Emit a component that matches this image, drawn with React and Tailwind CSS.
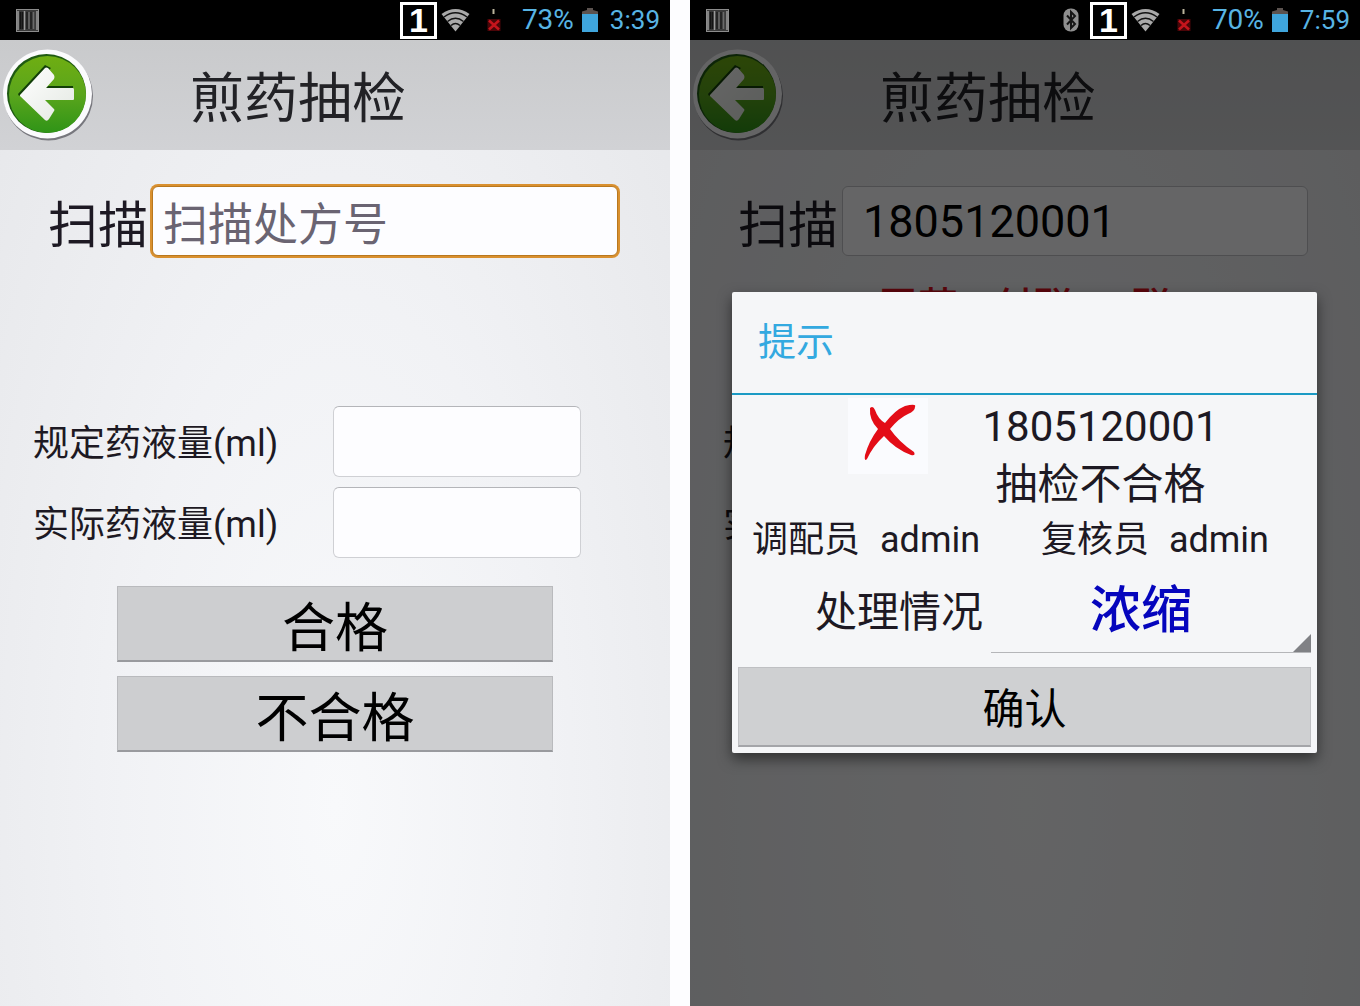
import React, { useState } from "react";

function BarcodeIcon() {
  return (
    <svg className="w-[23px] h-[23px]" viewBox="0 0 23 23" aria-hidden="true">
      <rect x="0.5" y="0.5" width="22" height="22" fill="#3a3a3a" stroke="#8c8c8c" />
      <path d="M2 2v19M8.5 2v19M21 2v19" stroke="#9a9a9a" strokeWidth="1.5" />
      <path d="M4.5 3v17M6.5 3v17" stroke="#141414" strokeWidth="1.5" />
      <path d="M11 3v17M15 3v17" stroke="#1f1f1f" strokeWidth="1.5" />
      <path d="M13 3v17M17.5 3v17" stroke="#6a6a6a" strokeWidth="1.5" />
    </svg>
  );
}

function BluetoothIcon() {
  return (
    <svg className="w-4 h-6" viewBox="0 0 16 24" aria-hidden="true">
      <rect x="0.5" y="0.5" width="15" height="23" rx="7" fill="#8f8f8f" />
      <path d="M4 7.5l8 8.5-4 4V4l4 4-8 8.5" fill="none" stroke="#151515" strokeWidth="2" />
    </svg>
  );
}

function WifiIcon() {
  return (
    <svg className="w-[29px] h-6" viewBox="0 0 29 24" aria-hidden="true">
      <path d="M0.5 6Q14.5 -4 28.5 6L14.5 23.5Z" fill="#a9a9a9" />
      <path d="M3 9Q14.5 0.5 26 9" fill="none" stroke="#111" strokeWidth="1.5" />
      <path d="M6.5 13.5Q14.5 7 22.5 13.5" fill="none" stroke="#111" strokeWidth="1.5" />
      <path d="M10 17.5Q14.5 13.5 19 17.5" fill="none" stroke="#111" strokeWidth="1.5" />
    </svg>
  );
}

function NoSignalIcon() {
  return (
    <svg className="w-4 h-6" viewBox="0 0 16 24" aria-hidden="true">
      <path d="M7.5 1v5" stroke="#b9b29a" strokeWidth="2" />
      <rect x="1.5" y="11" width="13" height="12" fill="#4a0508" />
      <path d="M3 12.5l10 9M13 12.5l-10 9" stroke="#c4141c" strokeWidth="2.5" />
    </svg>
  );
}

function BatteryIcon() {
  return (
    <svg className="w-4 h-6" viewBox="0 0 16 24" aria-hidden="true">
      <path d="M0 7V3.5L5 2V0h6v2l5 1.5V7Z" fill="#5c5350" />
      <rect y="6" width="16" height="18" fill="#3fa5dc" />
    </svg>
  );
}

function ArrowIcon({ id }) {
  return (
    <svg className="w-[92px] h-[94px]" viewBox="0 0 92 94" aria-hidden="true">
      <defs>
        <linearGradient id={`${id}-green`} x1="0" y1="0" x2="0" y2="1">
          <stop offset="0" stopColor="#6fae12" />
          <stop offset="0.5" stopColor="#5aa51c" />
          <stop offset="1" stopColor="#2f9417" />
        </linearGradient>
        <linearGradient id={`${id}-white`} x1="0" y1="0" x2="1" y2="1">
          <stop offset="0" stopColor="#fff" />
          <stop offset="1" stopColor="#e3e8e2" />
        </linearGradient>
      </defs>
      <circle cx="46.5" cy="48" r="44.5" fill="#77777d" />
      <circle cx="45.5" cy="46" r="44.5" fill="#fbfbfd" />
      <circle cx="44.5" cy="45.5" r="39.5" fill="#1f5a12" />
      <circle cx="45.5" cy="46.5" r="38.5" fill={`url(#${id}-green)`} />
      <path d="M16 46L43 17l6 3-4 4-28 24zM44 40l2-2h25v3z" fill="#123f08" />
      <path
        d="M18 47L43 20Q44 19 46 20L52 27Q53 29 52 31L44 40H71Q72 40 72 42V51Q72 52 71 52H43L52 61Q53 62 52 63L47 71Q45 74 43 72L18 48Z"
        fill={`url(#${id}-white)`}
      />
    </svg>
  );
}

function CrossIcon() {
  return (
    <svg className="w-20 h-[76px] bg-[#fafbfe]" viewBox="0 0 80 76" role="img" aria-label="不合格">
      <path
        d="M22 10Q25 7 27 12Q30 21 37 25Q47 12 57 8Q69 5 67 9Q67 13 60 16Q51 20 42 31Q51 44 66 54Q68 58 63 57Q47 51 36 38Q25 48 19 61Q16 64 17 57Q21 43 30 31Q21 22 22 10Z"
        fill="#e30d17"
      />
    </svg>
  );
}

function StatusBar({ battery, time, bluetooth }) {
  return (
    <div className="h-10 shrink-0 bg-black pl-4 pr-2.5 flex items-center justify-between text-[#58b4e4] leading-none">
      <BarcodeIcon />
      <div className="flex items-center">
        {bluetooth && <BluetoothIcon />}
        <span className="ml-[11px] w-[37px] h-[37px] border-[3px] border-white text-white text-[34px] leading-[31px] font-bold font-['Liberation_Sans',sans-serif] text-center">
          1
        </span>
        <span className="ml-1"><WifiIcon /></span>
        <span className="ml-4"><NoSignalIcon /></span>
        <span className="ml-5 text-[28px]">{battery}</span>
        <span className="ml-2"><BatteryIcon /></span>
        <span className="ml-3 text-[26px]">{time}</span>
      </div>
    </div>
  );
}

function AmountField({ id, label }) {
  return (
    <div className="flex items-center">
      <label htmlFor={id} className="w-[300px] text-[36px] leading-[44px] font-['Noto_Sans_CJK_SC',sans-serif]">
        {label}
        <span className="font-[Roboto,sans-serif]">(ml)</span>
      </label>
      <input
        id={id}
        type="text"
        inputMode="decimal"
        className="w-[248px] h-[71px] rounded-md border border-[#cfd0d4] border-t-[#b4b5b9] bg-[#fdfdff] px-2.5 text-[36px] outline-none"
      />
    </div>
  );
}

function ResultButton({ children }) {
  return (
    <button
      type="button"
      className="h-[76px] text-[53px] leading-[64px] font-['Noto_Sans_CJK_SC',sans-serif] bg-[#cdced0] border border-[#b9babd] border-b-2 border-b-[#999a9e]"
    >
      {children}
    </button>
  );
}

function CheckScreen({ id, battery, time, bluetooth, scan, focused, notice, children }) {
  const [code, setCode] = useState(scan);

  return (
    <section className="relative flex flex-col min-h-screen bg-[radial-gradient(ellipse_at_50%_80%,#f8f9fb_0%,#f1f2f5_45%,#e6e7ea_100%)]">
      <StatusBar battery={battery} time={time} bluetooth={bluetooth} />

      <header className="h-[110px] shrink-0 flex items-center gap-24 pl-0.5 bg-linear-to-b from-[#c9cacc] to-[#d1d2d5]">
        <button type="button" aria-label="返回">
          <ArrowIcon id={`${id}-arrow`} />
        </button>
        <h1 className="text-[54px] leading-[64px] text-[#222226] font-['Noto_Sans_CJK_SC',sans-serif]">
          煎药抽检
        </h1>
      </header>

      <main className="pt-9 text-[#1d1923]">
        <div className="flex items-center gap-1 pl-12 pr-[52px]">
          <label
            htmlFor={`${id}-scan`}
            className="shrink-0 text-[50px] leading-[60px] font-['Noto_Sans_CJK_SC',sans-serif]"
          >
            扫描
          </label>
          <input
            id={`${id}-scan`}
            type="text"
            value={code}
            placeholder="扫描处方号"
            onChange={(e) => setCode(e.target.value)}
            className={`min-w-0 flex-1 h-[70px] rounded-md bg-[#fdfdff] text-[45px] text-black placeholder:text-[#6a6472] outline-none ${
              focused
                ? "pl-2.5 border border-[#b9781f] ring-2 ring-[#d9902f] font-['Noto_Sans_CJK_SC',sans-serif]"
                : "pl-5 border border-[#c3c4c8]"
            }`}
          />
        </div>

        {/* Result line under the scan box */}
        <p className="h-[150px] pt-6 pl-[188px] text-[40px] leading-[48px] font-medium text-[#e01020] whitespace-pre font-['Noto_Sans_CJK_SC',sans-serif]">
          {notice}
        </p>

        <div className="pl-[33px] flex flex-col gap-2.5">
          <AmountField id={`${id}-required`} label="规定药液量" />
          <AmountField id={`${id}-actual`} label="实际药液量" />
        </div>

        <div className="mt-7 mx-auto w-[65%] flex flex-col gap-3.5 text-black">
          <ResultButton>合格</ResultButton>
          <ResultButton>不合格</ResultButton>
        </div>
      </main>

      {children}
    </section>
  );
}

function ResultDialog() {
  return (
    <div className="absolute inset-x-0 top-10 bottom-0 bg-black/60 flex items-center pl-[42px] pr-[43px] pb-0.5">
      <div
        role="dialog"
        aria-labelledby="dialog-title"
        className="w-full rounded-xs bg-[#f5f6f8] text-[#1d1923] shadow-[0_6px_14px_rgba(0,0,0,0.5)]"
      >
        <h2
          id="dialog-title"
          className="h-[103px] flex items-center pl-[26px] border-b-2 border-[#1b9ac4] text-[38px] text-[#33a9e0]"
        >
          提示
        </h2>

        <div className="pt-[3px] pl-[116px] pr-11 flex items-start">
          <CrossIcon />
          <div className="flex-1 text-center text-[42px] leading-[58px]">
            <p>1805120001</p>
            <p>抽检不合格</p>
          </div>
        </div>

        <div className="h-[52px] pl-5 pr-12 flex items-center justify-between text-[36px] leading-[52px]">
          <p className="flex gap-5"><span>调配员</span><span>admin</span></p>
          <p className="flex gap-5"><span>复核员</span><span>admin</span></p>
        </div>

        <div className="h-[87px] pr-1.5 flex items-center justify-end gap-2">
          <label htmlFor="handling" className="text-[42px] leading-[52px] font-['Noto_Sans_CJK_SC',sans-serif]">
            处理情况
          </label>
          <div className="relative w-80 h-full border-b border-[#b5b6b9]">
            <select
              id="handling"
              className="w-full h-full pt-1 pr-5 appearance-none bg-transparent text-[51px] leading-[64px] font-medium text-[#0505bd] [text-align-last:center] outline-none"
            >
              <option>浓缩</option>
            </select>
            <svg
              className="absolute right-0 bottom-0 w-[18px] h-[18px] pointer-events-none"
              viewBox="0 0 18 18"
              aria-hidden="true"
            >
              <path d="M18 0V18H0Z" fill="#808185" />
            </svg>
          </div>
        </div>

        <div className="pt-3.5 px-1.5 pb-1.5">
          <button
            type="button"
            className="w-full h-20 text-[42px] leading-[60px] text-black font-['Noto_Sans_CJK_SC',sans-serif] bg-[#cfd0d2] border border-[#bfc0c3] border-b-2 border-b-[#a4a5a9]"
          >
            确认
          </button>
        </div>
      </div>
    </div>
  );
}

export default function App() {
  return (
    <div className="grid grid-cols-2 gap-5 min-h-screen bg-[#fdfdff] font-[Roboto,'Noto_Sans_CJK_SC',sans-serif]">
      <CheckScreen id="left" battery="73%" time="3:39" scan="" focused />
      <CheckScreen id="right" battery="70%" time="7:59" scan="1805120001" bluetooth notice="罗芳    付联  二联">
        <ResultDialog />
      </CheckScreen>
    </div>
  );
}
